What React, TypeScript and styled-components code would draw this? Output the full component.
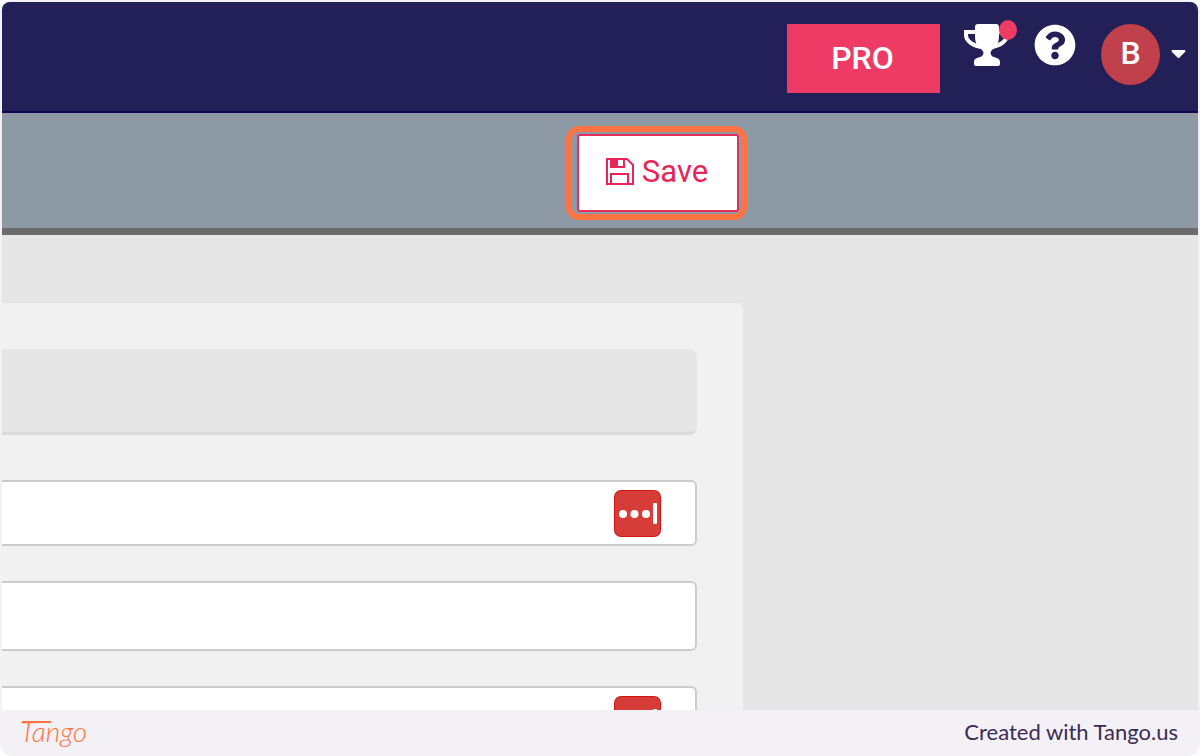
import React from "react";
import styled, { createGlobalStyle } from "styled-components";
import { FaQuestionCircle } from "react-icons/fa";

const GlobalStyle = createGlobalStyle`
  *, *::before, *::after { box-sizing: border-box; }
  body { margin: 0; background: #ffffff; font-family: Roboto, "Liberation Sans", sans-serif; }
  button, input { font: inherit; }
`;

const Frame = styled.div`
  display: flex;
  flex-direction: column;
  height: 100vh;
  padding: 2px 2px 0;
  background: #f3f1f6;
  border-radius: 12px;
`;

const Screen = styled.main`
  display: flex;
  flex: 1;
  flex-direction: column;
  min-height: 0;
  overflow: hidden;
  background: #e6e6e6;
  border-radius: 8px 8px 0 0;
`;

const Header = styled.header`
  display: flex;
  flex: none;
  align-items: flex-start;
  justify-content: flex-end;
  height: 111px;
  padding: 22px 12px 0 0;
  background: #231f57;
  border-bottom: 2px solid #0d0650;
`;

const ProButton = styled.button`
  width: 153px;
  height: 69px;
  margin-right: 24px;
  padding: 0 2px 2px 0;
  border: 0;
  background: #ee3b66;
  color: #ffffff;
  font-size: 32px;
  font-weight: 500;
  line-height: 36px;
`;

const IconButton = styled.button<{ $gap: number }>`
  position: relative;
  display: flex;
  margin-right: ${({ $gap }) => $gap}px;
  padding: 0;
  border: 0;
  background: none;
  color: #ffffff;
`;

const Notice = styled.span`
  position: absolute;
  top: -4px;
  right: -8px;
  width: 18px;
  height: 20px;
  border-radius: 50%;
  background: #ee3b66;
`;

const AccountButton = styled.button`
  display: flex;
  align-items: center;
  gap: 11px;
  padding: 0;
  border: 0;
  background: none;
`;

const Avatar = styled.span`
  width: 59px;
  height: 61px;
  border-radius: 50%;
  background: #c0414b;
  color: #ffffff;
  font-size: 32px;
  font-weight: 500;
  line-height: 58px;
  text-align: center;
`;

const Toolbar = styled.div`
  display: flex;
  flex: none;
  align-items: flex-start;
  justify-content: flex-end;
  height: 122px;
  padding: 13px 451px 0 0;
  background: #8d99a5;
  border-bottom: 7px solid #6b6b6b;
`;

const Highlight = styled.div`
  padding: 2px 2px 2px 5px;
  border: 6px solid #ff7442;
  border-radius: 13px;
`;

const SaveButton = styled.button`
  display: flex;
  align-items: center;
  justify-content: center;
  gap: 8px;
  width: 162px;
  height: 78px;
  padding: 0 2px 2px 0;
  border: 2px solid #e62e5c;
  border-radius: 3px;
  background: #ffffff;
  color: #ea2458;
  font-size: 31px;
  line-height: 36px;
`;

const Panel = styled.form`
  display: flex;
  flex: none;
  flex-direction: column;
  gap: 35px;
  margin: 68px 455px 0 0;
  padding: 46px 46px 35px 0;
  border-radius: 0 7px 0 0;
  background: #f1f1f1;
`;

const Summary = styled.div`
  height: 86px;
  margin-bottom: 10px;
  border-bottom: 3px solid #dadada;
  border-radius: 0 8px 8px 0;
  background: #e6e6e6;
`;

const Field = styled.div<{ $compact: boolean }>`
  display: flex;
  align-items: center;
  height: ${({ $compact }) => ($compact ? 66 : 70)}px;
  padding-right: 34px;
  border: 2px solid #cccccc;
  border-left: 0;
  border-radius: 0 6px 6px 0;
  background: #ffffff;
`;

const TextInput = styled.input`
  flex: 1;
  min-width: 0;
  height: 100%;
  padding: 0 16px;
  border: 0;
  outline: 0;
  background: transparent;
  font-size: 30px;
`;

const VaultButton = styled.button`
  display: flex;
  padding: 0;
  border: 0;
  background: none;
`;

const Footer = styled.footer`
  display: flex;
  flex: none;
  align-items: center;
  justify-content: space-between;
  height: 46px;
  padding: 0 20px 0 18px;
`;

const Brand = styled.a`
  position: relative;
  padding-bottom: 4px;
  color: #ff7442;
  font-family: Lato, sans-serif;
  font-size: 28px;
  font-style: italic;
  font-weight: 300;
  line-height: 36px;
  text-decoration: none;

  &::before {
    content: "";
    position: absolute;
    top: 8px;
    left: 2px;
    width: 29px;
    height: 2px;
    background: currentColor;
  }
`;

const Credit = styled.span`
  padding-bottom: 2px;
  color: #3b2b52;
  font-family: Lato, sans-serif;
  font-size: 22px;
  line-height: 28px;
`;

function TrophyIcon() {
  return (
    <svg width="45" height="42" viewBox="0 0 45 42" aria-hidden="true">
      <path
        d="M12 8H2V11C2 17 9 22 18 23M33 8H43V11C43 17 36 22 27 23"
        fill="none"
        stroke="#ffffff"
        strokeWidth="4"
      />
      <path
        d="M14 0H32Q35 0 35 3V12C35 20 32 23 28 26C26 28 26 30 28 32C30 34 36 33 36 38V40Q36 42 34 42H12Q10 42 10 40V38C10 33 16 34 18 32C20 30 20 28 18 26C14 23 11 20 11 12V3Q11 0 14 0Z"
        fill="#ffffff"
      />
    </svg>
  );
}

function FloppyIcon() {
  return (
    <svg width="28" height="28" viewBox="0 0 28 28" fill="none" stroke="currentColor" strokeWidth="2" aria-hidden="true">
      <path d="M1 1H21L27 7V26H1Z" />
      <path d="M5 1V9H18V1" />
      <path d="M6 2H12V9H6Z" fill="currentColor" stroke="none" />
      <path d="M5 26V16H22V26" />
    </svg>
  );
}

function VaultIcon() {
  return (
    <svg width="47" height="47" viewBox="0 0 47 47" aria-hidden="true">
      <rect width="47" height="47" rx="7" fill="#d21414" />
      <rect x="1" y="1" width="45" height="45" rx="6" fill="#d63c38" />
      <g fill="#ffffff">
        <circle cx="9" cy="24" r="4" />
        <circle cx="20.5" cy="24" r="4" />
        <circle cx="32" cy="24" r="4" />
        <rect x="39" y="13" width="4" height="21" rx="1" />
      </g>
    </svg>
  );
}

interface FormFieldProps {
  label: string;
  vault?: boolean;
}

function FormField({ label, vault = false }: FormFieldProps) {
  return (
    <Field $compact={vault}>
      <TextInput type="text" aria-label={label} />
      {vault && (
        <VaultButton type="button" aria-label="Fill from password manager">
          <VaultIcon />
        </VaultButton>
      )}
    </Field>
  );
}

export default function App() {
  return (
    <>
      <GlobalStyle />
      <Frame>
        <Screen>
          <Header>
            <ProButton type="button">PRO</ProButton>
            <IconButton type="button" aria-label="Achievements" $gap={25}>
              <TrophyIcon />
              <Notice />
            </IconButton>
            <IconButton type="button" aria-label="Help" $gap={25}>
              <FaQuestionCircle size={42} />
            </IconButton>
            <AccountButton type="button" aria-label="Account menu">
              <Avatar>B</Avatar>
              <svg width="15" height="9" viewBox="0 0 15 9" aria-hidden="true">
                <path d="M1 0H14Q15 1 14 2L8 8H7L1 2Q0 1 1 0Z" fill="#ffffff" />
              </svg>
            </AccountButton>
          </Header>
          <Toolbar>
            <Highlight>
              <SaveButton type="submit" form="settings">
                <FloppyIcon />
                Save
              </SaveButton>
            </Highlight>
          </Toolbar>
          <Panel id="settings">
            <Summary />
            <FormField label="Username" vault />
            <FormField label="Name" />
            <FormField label="Password" vault />
          </Panel>
        </Screen>
        <Footer>
          <Brand href="#tango">Tango</Brand>
          <Credit>Created with Tango.us</Credit>
        </Footer>
      </Frame>
    </>
  );
}
